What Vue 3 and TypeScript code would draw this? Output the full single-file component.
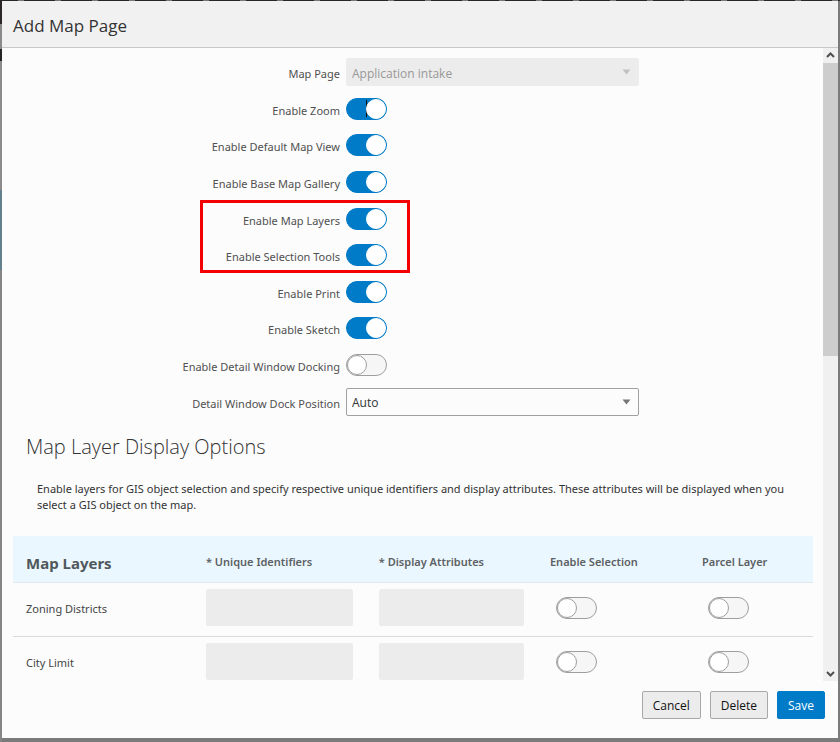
<script setup lang="ts">
import { reactive, ref } from 'vue'

interface ToggleSetting {
  id: string
  label: string
  on: boolean
  focused?: boolean
}

interface LayerRow {
  id: string
  name: string
  identifiers: string
  attributes: string
  selectable: boolean
  parcel: boolean
}

const mapPage = ref('Application intake')
const dockPosition = ref('Auto')

const toggles = reactive<ToggleSetting[]>([
  { id: 'zoom', label: 'Enable Zoom', on: true, focused: true },
  { id: 'default-view', label: 'Enable Default Map View', on: true },
  { id: 'gallery', label: 'Enable Base Map Gallery', on: true },
  { id: 'layers', label: 'Enable Map Layers', on: true },
  { id: 'selection', label: 'Enable Selection Tools', on: true },
  { id: 'print', label: 'Enable Print', on: true },
  { id: 'sketch', label: 'Enable Sketch', on: true },
  { id: 'docking', label: 'Enable Detail Window Docking', on: false },
])

const layers = reactive<LayerRow[]>([
  { id: 'zoning', name: 'Zoning Districts', identifiers: '', attributes: '', selectable: false, parcel: false },
  { id: 'city', name: 'City Limit', identifiers: '', attributes: '', selectable: false, parcel: false },
])
</script>

<template>
  <div class="backdrop">
    <section class="dialog" role="dialog" aria-labelledby="dialog-title">
      <header class="dialog-header">
        <h1 id="dialog-title">Add Map Page</h1>
      </header>

      <div class="dialog-body">
        <div class="content">
          <form class="settings" @submit.prevent>
            <div class="setting">
              <label for="map-page">Map Page</label>
              <div class="select-wrap">
                <select id="map-page" v-model="mapPage" disabled>
                  <option>Application intake</option>
                </select>
                <svg class="caret muted" viewBox="0 0 9 6" aria-hidden="true"><path d="M0.5 0.5H8.5L4.5 5.5Z" /></svg>
              </div>
            </div>
            <div v-for="t in toggles" :key="t.id" class="setting">
              <label :for="t.id">{{ t.label }}</label>
              <input :id="t.id" v-model="t.on" type="checkbox" class="switch" :class="{ focused: t.focused }" />
            </div>
            <div class="setting">
              <label for="dock">Detail Window Dock Position</label>
              <div class="select-wrap">
                <select id="dock" v-model="dockPosition">
                  <option>Auto</option>
                </select>
                <svg class="caret" viewBox="0 0 9 6" aria-hidden="true"><path d="M0.5 0.5H8.5L4.5 5.5Z" /></svg>
              </div>
            </div>
            <div class="highlight" aria-hidden="true"></div>
          </form>

          <h2>Map Layer Display Options</h2>
          <p class="intro">
            Enable layers for GIS object selection and specify respective unique identifiers and display attributes.
            These attributes will be displayed when you select a GIS object on the map.
          </p>

          <table>
            <colgroup>
              <col class="col-name" />
              <col class="col-ids" />
              <col class="col-attrs" />
              <col class="col-select" />
              <col class="col-parcel" />
            </colgroup>
            <thead>
              <tr>
                <th class="name" scope="col">Map Layers</th>
                <th scope="col">* Unique Identifiers</th>
                <th scope="col">* Display Attributes</th>
                <th scope="col">Enable Selection</th>
                <th scope="col">Parcel Layer</th>
              </tr>
            </thead>
            <tbody>
              <tr v-for="layer in layers" :key="layer.id">
                <td class="name">{{ layer.name }}</td>
                <td><input v-model="layer.identifiers" type="text" disabled :aria-label="`${layer.name} unique identifiers`" /></td>
                <td><input v-model="layer.attributes" type="text" disabled :aria-label="`${layer.name} display attributes`" /></td>
                <td class="toggle"><input v-model="layer.selectable" type="checkbox" class="switch" :aria-label="`${layer.name} enable selection`" /></td>
                <td class="toggle"><input v-model="layer.parcel" type="checkbox" class="switch" :aria-label="`${layer.name} parcel layer`" /></td>
              </tr>
            </tbody>
          </table>
        </div>

        <div class="scrollbar" aria-hidden="true">
          <svg class="arrow" viewBox="0 0 15 15"><path d="M4 9L7.5 5.5L11 9" /></svg>
          <div class="track"><div class="thumb"></div></div>
          <svg class="arrow" viewBox="0 0 15 15"><path d="M4 6L7.5 9.5L11 6" /></svg>
        </div>
      </div>

      <footer class="dialog-footer">
        <button type="button">Cancel</button>
        <button type="button">Delete</button>
        <button type="button" class="primary">Save</button>
      </footer>
    </section>
  </div>
</template>

<style>
body {
  background: #7b7b7c;
}
</style>

<style scoped>
.backdrop {
  box-sizing: border-box;
  display: flex;
  height: 100vh;
  padding: 1px 2px 4px;
  background:
    repeating-linear-gradient(90deg, #2a2526 0 18px, #777 18px 24px, #2a2526 24px 37px) top / 100% 1px no-repeat,
    linear-gradient(#2a2526 0 24px, #8a8a8a 24px 49px, #252525 49px 61px, #8b8b8b 61px 190px, #64808f 190px 270px, #858585 270px) left / 2px 100% no-repeat,
    #7b7b7c;
  font-family: "Noto Sans", "Open Sans", sans-serif;
  font-size: 11px;
  color: #333;
}
.dialog {
  display: flex;
  flex: 1;
  flex-direction: column;
  min-width: 0;
  background: #fcfcfc;
}
.dialog-header {
  padding: 13px 11px 9px;
  border-bottom: 1px solid #c8c8c8;
  background: #f1f1f1;
}
h1,
h2,
select,
button {
  font-family: "Open Sans", "Noto Sans", sans-serif;
}
h1 {
  margin: 0;
  font-size: 17px;
  line-height: 24px;
  font-weight: 400;
}
.dialog-body {
  display: flex;
  flex: 1;
  min-height: 0;
}
.content {
  flex: 1;
  min-width: 0;
  overflow: hidden;
}
.settings {
  position: relative;
  display: grid;
  grid-auto-rows: 1fr;
  min-height: 366px;
  padding-top: 6px;
}
.setting {
  display: grid;
  grid-template-columns: 338fr 293fr 178fr;
  column-gap: 6px;
  align-items: center;
}
.setting label {
  padding-top: 3px;
  text-align: right;
  white-space: nowrap;
  color: #505050;
}
.highlight {
  position: absolute;
  grid-row: 5 / 7;
  inset: 0 auto 1px 198px;
  box-sizing: border-box;
  width: 210px;
  border: 3px solid #f50000;
}
.select-wrap {
  display: grid;
  align-items: center;
}
.select-wrap > * {
  grid-area: 1 / 1;
}
select {
  appearance: none;
  box-sizing: border-box;
  width: 100%;
  height: 28px;
  margin: 0;
  padding: 2px 24px 0 5px;
  border: 1px solid #a0a0a0;
  border-radius: 2px;
  background: #fcfcfc;
  color: #333;
  font-size: 12px;
}
select:disabled {
  border-color: #ececec;
  background: #ececec;
  color: #989898;
  opacity: 1;
}
.caret {
  justify-self: end;
  width: 9px;
  height: 6px;
  margin-right: 8px;
  fill: #777;
  pointer-events: none;
}
.caret.muted {
  fill: #c0c0c0;
}
.switch {
  appearance: none;
  display: flex;
  align-items: center;
  box-sizing: border-box;
  width: 41px;
  height: 22px;
  margin: 0;
  border: 1px solid #9e9e9e;
  border-radius: 11px;
  background: #f6f6f6;
}
.switch::before {
  content: "";
  box-sizing: border-box;
  width: 20px;
  height: 20px;
  border: 1px solid #9e9e9e;
  border-radius: 50%;
  background: #fff;
}
.switch:checked {
  justify-content: flex-end;
  border-color: #007bc8;
  background: #007bc8;
}
.switch:checked::before {
  border-color: #fff;
}
.switch.focused::after {
  content: "";
  order: -1;
  width: 1px;
  height: 17px;
  margin-right: -1px;
  background: #111;
}
h2 {
  margin: 0;
  padding: 13px 24px 0;
  font-size: 20px;
  line-height: 28px;
  font-weight: 300;
}
.intro {
  margin: 20px 0 0;
  padding: 0 20px 0 35px;
  line-height: 16px;
}
table {
  width: calc(100% - 21px);
  margin: 23px 10px 0 11px;
  border-spacing: 0;
  table-layout: fixed;
}
.col-name { width: 22.5%; }
.col-ids { width: 21.6%; }
.col-attrs { width: 21.4%; }
.col-select { width: 19%; }
.col-parcel { width: 15.5%; }
th {
  box-sizing: border-box;
  height: 47px;
  padding: 5px 13px 0;
  border-bottom: 1px solid #e0e8f0;
  background: #ebf7fe;
  text-align: left;
  font-weight: 600;
  color: #5c6165;
  white-space: nowrap;
}
th.name {
  padding-top: 8px;
  font-size: 15px;
  font-weight: 700;
  color: #50585c;
}
td {
  box-sizing: border-box;
  height: 54px;
  padding: 6px 13px 10px;
  border-bottom: 1px solid #d8dadc;
  vertical-align: top;
  color: #444;
}
td.name {
  padding-top: 18px;
}
td.toggle {
  padding-top: 14px;
  padding-left: 19px;
}
td input[type="text"] {
  display: block;
  box-sizing: border-box;
  width: 100%;
  height: 37px;
  border: 0;
  border-radius: 2px;
  background: #ececec;
  font: inherit;
}
.scrollbar {
  display: flex;
  flex-direction: column;
  width: 15px;
  background: #f0f0f0;
}
.arrow {
  width: 15px;
  height: 15px;
  fill: none;
  stroke: #505050;
  stroke-width: 2;
}
.track {
  flex: 1;
}
.thumb {
  height: 48.6%;
  background: #cdcdcd;
}
.dialog-footer {
  display: flex;
  justify-content: flex-end;
  gap: 9px;
  padding: 10px 13px 19px;
}
button {
  height: 28px;
  margin: 0;
  padding: 0 10px;
  border: 1px solid #a8a8a8;
  border-radius: 2px;
  background: #ececec;
  color: #111;
  font-size: 12px;
}
button.primary {
  border-color: #007bc8;
  background: #007bc8;
  color: #fff;
}
</style>
